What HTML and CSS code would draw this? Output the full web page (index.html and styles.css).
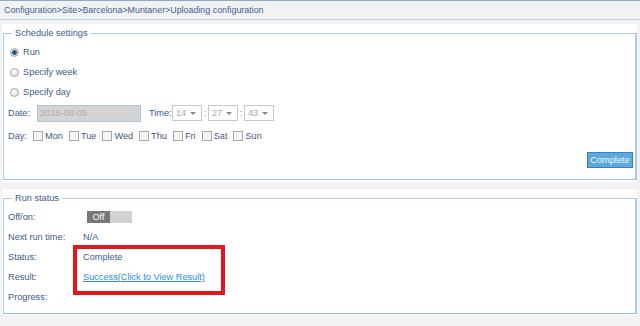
FILE: index.html
```html
<!DOCTYPE html>
<html lang="en">
<head>
    <meta charset="UTF-8">
    <meta name="viewport" content="width=device-width, initial-scale=1.0">
    <title>Uploading configuration</title>
    <link rel="stylesheet" href="styles.css">
</head>
<body>

    <!-- Breadcrumb -->
    <div class="crumb">Configuration&gt;Site&gt;Barcelona&gt;Muntaner&gt;Uploading configuration</div>

    <!-- Schedule settings -->
    <div class="panel">
        <fieldset>
            <legend>Schedule settings</legend>
            <label class="opt"><input type="radio" name="mode" checked> Run</label>
            <label class="opt"><input type="radio" name="mode"> Specify week</label>
            <label class="opt"><input type="radio" name="mode"> Specify day</label>

            <div class="date-row">
                <span class="date-label">Date:</span>
                <input type="text" class="date-input" value="2016-08-05" disabled>
                <span class="time-label">Time:</span>
                <span class="sel">14</span>
                <span class="colon">:</span>
                <span class="sel">27</span>
                <span class="colon">:</span>
                <span class="sel">43</span>
            </div>

            <div class="day-row">
                <span class="day-label">Day:</span>
                <label class="day"><input type="checkbox"> Mon</label>
                <label class="day"><input type="checkbox"> Tue</label>
                <label class="day"><input type="checkbox"> Wed</label>
                <label class="day"><input type="checkbox"> Thu</label>
                <label class="day"><input type="checkbox"> Fri</label>
                <label class="day"><input type="checkbox"> Sat</label>
                <label class="day"><input type="checkbox"> Sun</label>
            </div>

            <div class="actions">
                <button class="btn">Complete</button>
            </div>
        </fieldset>
    </div>

    <!-- Run status -->
    <div class="panel status-panel">
        <fieldset>
            <legend>Run status</legend>
            <div class="status-grid">
                <span>Off/on:</span>
                <span><span class="toggle"><span class="toggle-off">Off</span><span class="toggle-on"></span></span></span>
                <span>Next run time:</span>
                <span>N/A</span>
                <span>Status:</span>
                <span>Complete</span>
                <span>Result:</span>
                <span><a href="#" class="result-link">Success(Click to View Result)</a></span>
                <span>Progress:</span>
                <span></span>
            </div>
        </fieldset>
        <div class="highlight"></div>
    </div>

</body>
</html>
```

FILE: styles.css
```css
/* Global */
* {
    box-sizing: border-box;
}

body {
    margin: 0;
    background: #f2f2f2;
    color: #3b5a8b;
    font-family: 'Liberation Sans', Arial, sans-serif;
    font-size: 9.2px;
}

/* Breadcrumb */
.crumb {
    height: 20px;
    line-height: 18px;
    padding-left: 4px;
    border-top: 1px solid #8ea8c8;
    border-bottom: 1px solid #b9d5ec;
    background: #f2f2f2;
    color: #3e5f91;
    font-size: 8.9px;
}

/* Panels */
.panel {
    margin: 4px 3px 0 2px;
    padding: 3px 0 2px 1px;
    background: white;
}

.status-panel {
    position: relative;
    margin-top: 7px;
    padding-bottom: 1px;
}

fieldset {
    margin: 0;
    padding: 3px 2px 11px 4px;
    border: 1px solid #a9cde8;
    border-right-width: 2px;
    border-bottom-color: #8cc3e8;
}

legend {
    margin-left: 4px;
    padding: 0 3px;
    line-height: 12px;
    color: #3b5a8b;
}

/* Radio options */
.opt {
    display: flex;
    align-items: center;
    height: 20px;
}

.opt input {
    appearance: none;
    width: 9px;
    height: 9px;
    margin: 0 4px 0 2px;
    border: 1px solid #a8a8a8;
    border-radius: 50%;
    background: radial-gradient(circle at 40% 35%, #ffffff, #d6d6d6);
}

.opt input:checked {
    background: radial-gradient(circle, #1f4f8f 0 2px, #cfd6de 2.5px);
}

/* Date and time */
.date-row {
    display: flex;
    align-items: center;
    height: 22px;
}

.date-label {
    width: 29px;
}

.date-input {
    width: 104px;
    height: 17px;
    margin: 0;
    padding: 0 2px;
    border: 1px solid #a8c8e2;
    background: #d4d4d4;
    color: #adadad;
    font: inherit;
}

.time-label {
    margin-left: 8px;
    width: 23px;
}

.sel {
    position: relative;
    width: 30px;
    height: 16px;
    line-height: 14px;
    padding-left: 3px;
    border: 1px solid #c8c8c8;
    color: #a9a9a9;
}

.sel::after {
    content: "";
    position: absolute;
    right: 5px;
    top: 6px;
    border: 3px solid transparent;
    border-top-color: #8a8a8a;
}

.colon {
    width: 6px;
    text-align: center;
    color: #9a9a9a;
}

/* Days */
.day-row {
    display: flex;
    align-items: center;
    height: 24px;
}

.day-label {
    width: 25px;
}

.day {
    display: flex;
    align-items: center;
    margin-right: 6px;
}

.day input {
    appearance: none;
    width: 10px;
    height: 10px;
    margin: 0 2px 0 0;
    border: 1px solid #a8a8a8;
    background: #f5f5f5;
}

/* Button */
.actions {
    display: flex;
    justify-content: flex-end;
    margin-top: 4px;
}

.btn {
    width: 46px;
    height: 16px;
    padding: 0;
    border: 1px solid #3d7dbd;
    background: #5ba9de;
    color: #f2f8ff;
    font: inherit;
    cursor: pointer;
}

/* Run status */
.status-panel fieldset {
    padding-bottom: 6px;
}

.status-grid {
    display: grid;
    grid-template-columns: 75px auto;
    grid-auto-rows: 20px;
    align-items: center;
}

.toggle {
    display: inline-flex;
    margin-left: 4px;
    vertical-align: middle;
}

.toggle-off {
    width: 23px;
    height: 12px;
    line-height: 12px;
    background: #777;
    color: white;
    text-align: center;
}

.toggle-on {
    width: 22px;
    height: 12px;
    background: #d2d2d2;
}

.result-link {
    color: #2a8de2;
}

/* Annotation box */
.highlight {
    position: absolute;
    left: 71px;
    top: 56px;
    width: 152px;
    height: 50px;
    border: 4px solid #e5141f;
}
```
